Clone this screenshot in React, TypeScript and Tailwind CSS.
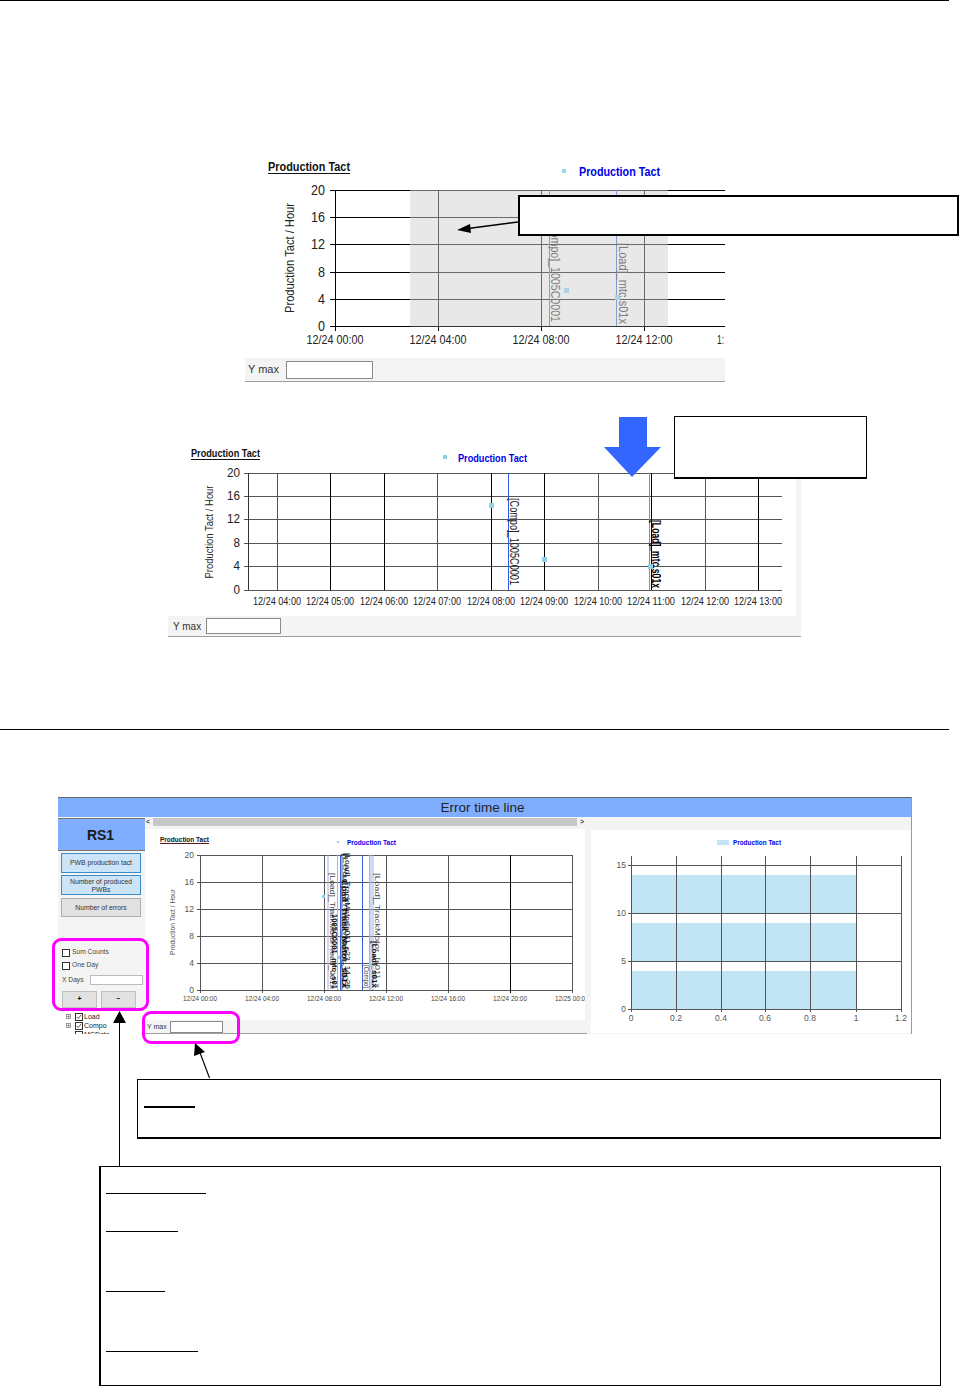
import React from "react";

const pink = "absolute rounded-[9px] border-[3px] border-[#ff00ff]";

type TP = { x: number; y: number; w?: number; s?: number; a?: "start" | "middle" | "end"; c?: string; b?: boolean; children: string };
function Tx({ x, y, w, s = 12, a = "middle", c = "#222", b = false, children }: TP) {
  return (
    <text x={x} y={y} fontSize={s} textAnchor={a} fill={c} fontWeight={b ? 700 : 400} textLength={w} lengthAdjust={w ? "spacingAndGlyphs" : undefined}>
      {children}
    </text>
  );
}
function V({ x, y, w, s = 11, c = "#333", b = false, children }: { x: number; y: number; w: number; s?: number; c?: string; b?: boolean; children: string }) {
  return (
    <text transform={`rotate(90 ${x} ${y})`} x={x} y={y} fontSize={s} fill={c} fontWeight={b ? 700 : 400} textLength={w} lengthAdjust="spacingAndGlyphs">
      {children}
    </text>
  );
}
function Up({ x, y, w, s = 12, c = "#222", children }: { x: number; y: number; w: number; s?: number; c?: string; children: string }) {
  return (
    <text transform={`rotate(-90 ${x} ${y})`} x={x} y={y} fontSize={s} fill={c} textAnchor="middle" textLength={w} lengthAdjust="spacingAndGlyphs">
      {children}
    </text>
  );
}

function Toolbar({ className, inputClass, textClass = "", children }: { className: string; inputClass: string; textClass?: string; children: string }) {
  return (
    <div className={`flex items-center bg-[#f4f4f4] border-b border-[#a0a0a0] ${className}`}>
      <span className={`text-[#333] whitespace-nowrap ${textClass}`}>{children}</span>
      <div className={`bg-white border border-[#8a8a8a] ${inputClass}`} />
    </div>
  );
}

function Chart1() {
  const ys = [190, 217, 244, 272, 299, 326];
  const labs = ["20", "16", "12", "8", "4", "0"];
  return (
    <svg width={480} height={203} viewBox="245 155 480 203" className="block">
      <Tx x={268} y={171} w={82} s={13} a="start" c="#111" b>Production Tact</Tx>
      <line x1={268} x2={350} y1={173.5} y2={173.5} stroke="#111" strokeWidth={1} />
      <rect x={562} y={169} width={4} height={4} fill="#9dd6ee" />
      <Tx x={579} y={176} w={81} s={13} a="start" c="#0000e8" b>Production Tact</Tx>
      {ys.map((y, i) => (
        <g key={y}>
          <line x1={330} x2={725} y1={y + 0.5} y2={y + 0.5} stroke="#000" />
          <Tx x={325} y={y + 5} w={i < 3 ? 14 : 7} s={14} a="end">{labs[i]}</Tx>
        </g>
      ))}
      {[335, 438, 541, 644].map((x) => (
        <line key={x} x1={x + 0.5} x2={x + 0.5} y1={190} y2={331} stroke="#000" />
      ))}
      <line x1={549.5} x2={549.5} y1={190} y2={326} stroke="#3a66d8" />
      <line x1={616.5} x2={616.5} y1={190} y2={326} stroke="#3a66d8" />
      <V x={551} y={221} w={101} s={13} c="#222">[Compo]_1005C0001</V>
      <V x={619} y={243} w={81} s={13} c="#222">[Load]_mtc,s01x</V>
      <rect x={564} y={288} width={5} height={5} fill="#8fd0ea" />
      <rect x={615} y={295} width={5} height={5} fill="#8fd0ea" />
      <rect x={410} y={190} width={258} height={136.5} fill="#d1d1d1" fillOpacity={0.5} />
      <Up x={294} y={258} w={110} s={12.5}>Production Tact / Hour</Up>
      {[335, 438, 541, 644].map((x) => (
        <Tx key={x} x={x} y={344} w={57} s={13}>{x === 335 ? "12/24 00:00" : x === 438 ? "12/24 04:00" : x === 541 ? "12/24 08:00" : "12/24 12:00"}</Tx>
      ))}
      <Tx x={717} y={344} w={7} s={13} a="start">1:</Tx>
    </svg>
  );
}

function Chart2() {
  const ys = [473, 496, 519, 543, 566, 590];
  const labs = ["20", "16", "12", "8", "4", "0"];
  const xs = [277, 330, 384, 437, 491, 544, 598, 651, 705, 758];
  const hours = ["04", "05", "06", "07", "08", "09", "10", "11", "12", "13"];
  const dark = [330, 384, 491, 544, 651, 758];
  return (
    <svg width={628} height={170} viewBox="168 446 628 170" className="block bg-white">
      <Tx x={191} y={457} w={69} s={11} a="start" c="#111" b>Production Tact</Tx>
      <line x1={191} x2={260} y1={459.5} y2={459.5} stroke="#111" />
      <rect x={443} y={455} width={4} height={4} fill="#8fd0ea" />
      <Tx x={458} y={462} w={69} s={11} a="start" c="#0000e8" b>Production Tact</Tx>
      {ys.map((y, i) => (
        <g key={y}>
          <line x1={244} x2={782} y1={y + 0.5} y2={y + 0.5} stroke="#555" />
          <Tx x={240} y={y + 4} w={i < 3 ? 13 : 6.5} s={12} a="end">{labs[i]}</Tx>
        </g>
      ))}
      <line x1={248.5} x2={248.5} y1={473} y2={590} stroke="#333" />
      {xs.map((x, i) => (
        <g key={x}>
          <line x1={x + 0.5} x2={x + 0.5} y1={473} y2={590} stroke={dark.includes(x) ? "#000" : "#555"} />
          <Tx x={x} y={605} w={48} s={11}>{`12/24 ${hours[i]}:00`}</Tx>
        </g>
      ))}
      <line x1={508.5} x2={508.5} y1={473} y2={590} stroke="#2f5fe0" />
      <line x1={649.5} x2={649.5} y1={473} y2={590} stroke="#6f90e8" />
      <V x={510} y={498} w={87} s={12} c="#222">[Compo]_1005C0001</V>
      <V x={652} y={520} w={68} s={12} c="#000" b>[Load]_mtc,s01x</V>
      <rect x={489} y={503} width={5} height={5} fill="#8fd0ea" />
      <rect x={542} y={557} width={5} height={5} fill="#8fd0ea" />
      <rect x={648} y={564} width={5} height={5} fill="#8fd0ea" />
      <Up x={213} y={532} w={93} s={11}>Production Tact / Hour</Up>
    </svg>
  );
}

function Chart3() {
  const ys = [855, 882, 909, 936, 963, 990];
  const labs = ["20", "16", "12", "8", "4", "0"];
  const xs = [200, 262, 324, 386, 448, 510];
  const xl = ["12/24 00:00", "12/24 04:00", "12/24 08:00", "12/24 12:00", "12/24 16:00", "12/24 20:00"];
  return (
    <svg width={440} height={191} viewBox="145 829 440 191" className="block bg-white">
      <Tx x={160} y={842} w={49} s={7.5} a="start" c="#111" b>Production Tact</Tx>
      <line x1={160} x2={209} y1={843.5} y2={843.5} stroke="#5a1a1a" />
      <rect x={337} y={841} width={2} height={2} fill="#8fd0ea" />
      <Tx x={347} y={845} w={49} s={7.5} a="start" c="#0000e8" b>Production Tact</Tx>
      {ys.map((y, i) => (
        <g key={y}>
          <line x1={197} x2={572} y1={y + 0.5} y2={y + 0.5} stroke="#555" />
          <Tx x={194} y={y + 3} s={8.5} a="end" c="#555">{labs[i]}</Tx>
        </g>
      ))}
      {xs.map((x, i) => (
        <g key={x}>
          <line x1={x + 0.5} x2={x + 0.5} y1={855} y2={993} stroke={i === 5 ? "#000" : "#555"} />
          <Tx x={x} y={1001} w={34} s={7.5} c="#444">{xl[i]}</Tx>
        </g>
      ))}
      <line x1={572.5} x2={572.5} y1={855} y2={993} stroke="#555" />
      <Tx x={555} y={1001} w={30} s={7.5} a="start" c="#444">12/25 00:0</Tx>
      {[328, 337.5, 340.5, 342, 369.5, 371, 373].map((x, i) => (
        <line key={i} x1={x} x2={x} y1={855} y2={990} stroke={i === 2 || i === 3 ? "#3a60d8" : "#9db4ee"} />
      ))}
      <line x1={362.5} x2={362.5} y1={855} y2={990} stroke="#3a60d8" />
      <V x={330} y={873} w={116} s={7.5} c="#444">[Load]_TrackMotorRead_001x</V>
      <V x={332} y={914} w={75} s={7.5} c="#111" b>1005C0001_mtc_s01</V>
      <V x={343} y={853} w={136} s={7.5} c="#444">[Load]_TrackMotor_s01</V>
      <V x={345} y={853} w={136} s={7.5} c="#111">[Load]_TrackMotor[s01]_s23_14_25</V>
      <V x={342} y={880} w={108} s={7.5} c="#111" b>Load_Track_Motor_s01x</V>
      <V x={364} y={965} w={23} s={7.5} c="#444">[Compo]</V>
      <V x={375} y={873} w={115} s={7.5} c="#444">[Load]_TrackMotor_[s01]_x</V>
      <V x={372} y={941} w={47} s={7.5} c="#111" b>[Load]_s01x</V>
      <rect x={322} y={895} width={3} height={3} fill="#8fd0ea" />
      <rect x={337} y={956} width={3} height={3} fill="#8fd0ea" />
      <rect x={369} y={963} width={3} height={3} fill="#8fd0ea" />
      <Up x={175} y={922} w={66} s={7.5} c="#555">Production Tact / Hour</Up>
    </svg>
  );
}

function Chart4() {
  const xs = [631, 676, 721, 765, 810, 856, 901];
  const xl = ["0", "0.2", "0.4", "0.6", "0.8", "1", "1.2"];
  const bars = [875, 923, 971];
  const ys = [{ y: 865, l: "15" }, { y: 913, l: "10" }, { y: 961, l: "5" }, { y: 1009, l: "0" }];
  return (
    <svg width={321} height={203} viewBox="591 830 321 203" className="block bg-white">
      <rect x={717} y={840} width={12} height={5} fill="#c2e5f5" />
      <Tx x={733} y={845} w={48} s={7.5} a="start" c="#0000e8" b>Production Tact</Tx>
      {bars.map((y) => (
        <rect key={y} x={631} y={y} width={225} height={38} fill="#c2e5f5" />
      ))}
      {ys.map((r) => (
        <g key={r.y}>
          <line x1={628} x2={901} y1={r.y + 0.5} y2={r.y + 0.5} stroke="#555" />
          <Tx x={626} y={r.y + 3} s={8.5} a="end" c="#555">{r.l}</Tx>
        </g>
      ))}
      {xs.map((x, i) => (
        <g key={x}>
          <line x1={x + 0.5} x2={x + 0.5} y1={856} y2={1012} stroke="#555" />
          <Tx x={x} y={1021} s={8.5} c="#555">{xl[i]}</Tx>
        </g>
      ))}
    </svg>
  );
}

function SideButton({ className, children }: { className: string; children: React.ReactNode }) {
  return <div className={`flex items-center justify-center text-center leading-[8px] text-[6.8px] text-[#333] border ${className}`}>{children}</div>;
}

function Check({ on, className = "" }: { on?: boolean; className?: string }) {
  return (
    <div className={`w-[8px] h-[8px] shrink-0 bg-white border border-[#333] ${className}`}>
      {on && (
        <svg viewBox="0 0 8 8" className="w-full h-full block">
          <path d="M1 4 L3 6 L7 1" stroke="#222" strokeWidth={1} fill="none" />
        </svg>
      )}
    </div>
  );
}

function TreeRow({ label, on, expand = true }: { label: string; on?: boolean; expand?: boolean }) {
  return (
    <div className="flex items-center h-[9px] pl-[8px] gap-[1px] text-[7px] text-[#222]">
      <div className="w-[5px] h-[5px] mr-[3px] flex items-center justify-center">
        {expand && (
          <svg viewBox="0 0 5 5" className="w-[5px] h-[5px] block">
            <rect x={0.5} y={0.5} width={4} height={4} fill="none" stroke="#999" />
            <path d="M1.5 2.5H3.5M2.5 1.5V3.5" stroke="#666" />
          </svg>
        )}
      </div>
      <Check on={on} />
      <span className="leading-none">{label}</span>
    </div>
  );
}

function Window() {
  return (
    <div className="ml-[58px] w-[854px] h-[237px] flex flex-col border-r border-[#9a9a9a]">
      <div className="h-[20px] bg-[#80aeff] border-t border-[#666] pr-[4px] pt-[1px] flex items-center justify-center text-[13.5px] text-[#222] shrink-0">Error time line</div>
      <div className="flex flex-1 min-h-0 bg-[#f4f4f4] overflow-hidden">
        <div className="w-[87px] shrink-0 flex flex-col">
          <div className="h-[33px] mt-[1px] pr-[2px] pt-[2px] bg-[#80aeff] border-t border-b border-[#777] flex items-center justify-center font-bold text-[14px] text-[#1a1a1a]">RS1</div>
          <div className="flex flex-col gap-[2px] pl-[3px] pt-[2px] w-[83px]">
            <SideButton className="h-[20px] bg-[#cce4f7] border-[#3a8cc8]">PWB production tact</SideButton>
            <SideButton className="h-[20px] bg-[#cce4f7] border-[#3a8cc8] pt-[1px]"><span>Number of produced<br />PWBs</span></SideButton>
            <SideButton className="h-[19px] mt-[1px] bg-[#e1e1e1] border-[#adadad]">Number of errors</SideButton>
          </div>
          <div className="flex flex-col pl-[4px] pt-[31px] h-[94px] text-[6.7px] text-[#444]">
            <div className="flex items-center gap-[2px] h-[9px]"><Check />Sum Counts</div>
            <div className="flex items-center gap-[2px] h-[9px] mt-[4px]"><Check />One Day</div>
            <div className="flex items-center h-[10px] mt-[5px] gap-[6px]">
              <span>X Days</span>
              <div className="w-[53px] h-[10px] bg-white border border-[#bbb]" />
            </div>
            <div className="flex gap-[4px] mt-[6px] text-black">
              <div className="w-[35px] h-[17px] bg-[#e1e1e1] border border-[#c0c0c0] flex items-center justify-center font-bold">+</div>
              <div className="w-[35px] h-[17px] bg-[#e1e1e1] border border-[#c0c0c0] flex items-center justify-center font-bold">−</div>
            </div>
          </div>
          <div className="flex-1 bg-white pt-[1px] overflow-hidden">
            <TreeRow label="Load" on />
            <TreeRow label="Compo" on />
            <TreeRow label="MCData" expand={false} />
          </div>
        </div>
        <div className="w-[445px] shrink-0 flex flex-col">
          <div className="h-[10px] flex items-center text-[7px] font-bold text-[#444] pl-[1px] pr-[2px] shrink-0">
            <span className="w-[7px]">&lt;</span>
            <div className="w-[424px] h-[8px] bg-[#c8c8c8]" />
            <span className="ml-[3px]">&gt;</span>
          </div>
          <div className="pt-[2px]"><Chart3 /></div>
          <Toolbar className="h-[14px] w-[442px] pl-[2px] gap-[3px] text-[7px]" inputClass="w-[53px] h-[12px]" textClass="mt-[2px]">Y max</Toolbar>
        </div>
        <div className="flex-1 pt-[13px] pl-[1px]"><Chart4 /></div>
      </div>
    </div>
  );
}

export default function App() {
  return (
    <div className="relative w-[959px] h-[1386px] bg-white overflow-hidden font-['Liberation_Sans',Arial,sans-serif]">
      <section className="h-[729px] w-[949px] border-t border-black">
        <div className="ml-[245px] mt-[154px] w-[480px]">
          <Chart1 />
          <Toolbar className="h-[24px] pl-[3px] gap-[7px] text-[11px]" inputClass="w-[87px] h-[18px]">Y max</Toolbar>
        </div>
        <div className="ml-[168px] mt-[64px] w-[633px]">
          <div className="bg-[#f4f4f4] pr-[5px]"><Chart2 /></div>
          <Toolbar className="h-[21px] pl-[5px] gap-[5px] text-[10px]" inputClass="w-[75px] h-[16px]">Y max</Toolbar>
        </div>
      </section>
      <section className="w-[949px] border-t border-black pt-[67px]">
        <Window />
      </section>

      <div className="ml-[137px] mt-[45px] w-[804px] h-[60px] border border-b-2 border-black pl-[6px] pt-[26px] relative">
        <div className="w-[51px] h-[2px] bg-black" />
      </div>
      <div className="ml-[99px] mt-[27px] w-[842px] h-[220px] border border-l-[2px] border-black pl-[5px] pt-[26px] flex flex-col items-start">
        <div className="w-[100px] h-[1px] bg-black" />
        <div className="w-[72px] h-[1px] bg-black mt-[37px]" />
        <div className="w-[59px] h-[1px] bg-black mt-[59px]" />
        <div className="w-[92px] h-[1px] bg-black mt-[59px]" />
      </div>

      <div className="absolute left-[518px] top-[195px] w-[441px] h-[41px] bg-white border-2 border-black" />
      <div className="absolute left-[674px] top-[416px] w-[193px] h-[63px] bg-white border border-b-2 border-black" />
      <div className={`${pink} left-[52px] top-[938px] w-[97px] h-[73px]`} />
      <div className={`${pink} left-[142px] top-[1011px] w-[98px] h-[33px]`} />

      <svg className="absolute left-0 top-0 pointer-events-none" width={959} height={1386}>
        <line x1={518} y1={222} x2={468} y2={228.5} stroke="#000" strokeWidth={1.5} />
        <polygon points="457,230 470,224 471,233" fill="#000" />
        <polygon points="619,417 647,417 647,447 661,447 632,477 604,447 619,447" fill="#3366ff" />
        <line x1={119.5} y1={1166} x2={119.5} y2={1020} stroke="#000" strokeWidth={1} />
        <polygon points="119.5,1011 126,1023 113,1023" fill="#000" />
        <line x1={209.5} y1={1078} x2={199} y2={1050} stroke="#000" strokeWidth={1.2} />
        <polygon points="195,1043 205,1052 194,1056" fill="#000" />
      </svg>
    </div>
  );
}
